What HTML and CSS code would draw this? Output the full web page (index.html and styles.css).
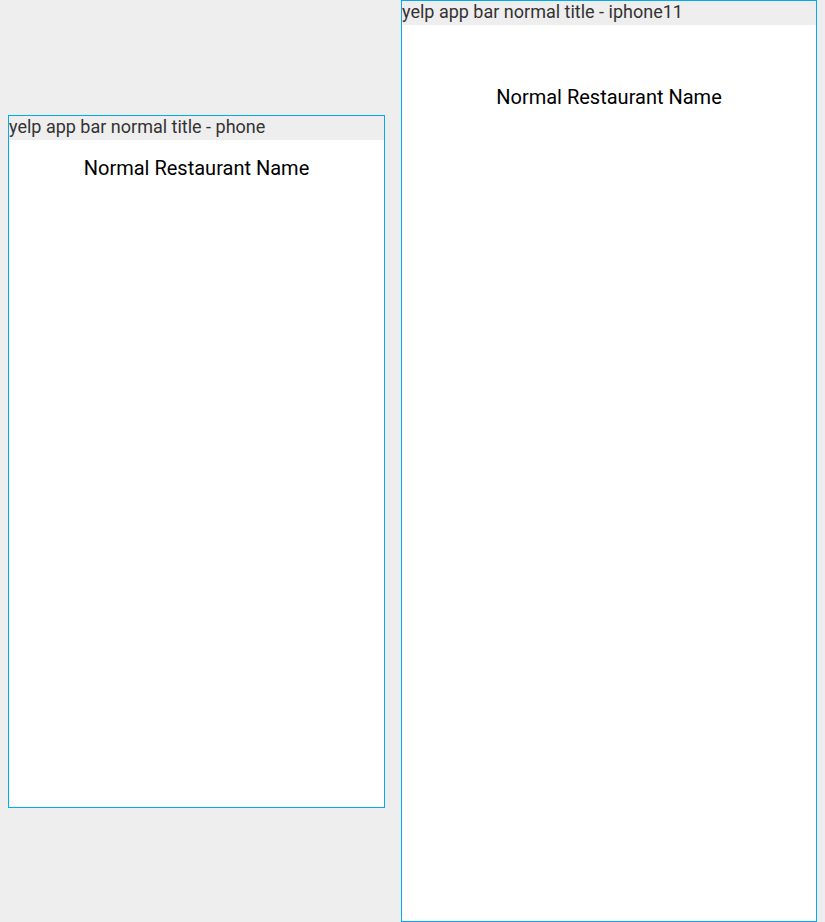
FILE: index.html
```html
<!DOCTYPE html>
<html>
<head>
<meta charset="utf-8">
<link rel="stylesheet" href="styles.css">
</head>
<body>
<div class="board">
  <div class="device device-phone">
    <div class="label">yelp app bar normal title - phone</div>
    <div class="screen">
      <div class="appbar"><span class="title">Normal Restaurant Name</span></div>
    </div>
  </div>
  <div class="device device-iphone">
    <div class="label">yelp app bar normal title - iphone11</div>
    <div class="screen">
      <div class="safe-top"></div>
      <div class="appbar"><span class="title">Normal Restaurant Name</span></div>
    </div>
  </div>
</div>
</body>
</html>
```

FILE: styles.css
```css
html, body {
  margin: 0;
  padding: 0;
  background: #eeeeee;
}
body {
  font-family: Roboto, "Noto Sans", sans-serif;
}
.board {
  display: flex;
  align-items: center;
  gap: 16px;
  padding-left: 8px;
  height: 922px;
}
.device {
  border: 1px solid #03a9f4;
  display: flex;
  flex-direction: column;
}
.label {
  height: 24px;
  line-height: 22px;
  font-size: 18px;
  color: #333333;
  background: #eeeeee;
  white-space: nowrap;
  overflow: hidden;
}
.screen {
  background: #ffffff;
  display: flex;
  flex-direction: column;
}
.device-phone .screen {
  width: 375px;
  height: 667px;
}
.device-iphone .screen {
  width: 414px;
  height: 896px;
}
.safe-top {
  height: 44px;
}
.appbar {
  height: 56px;
  display: flex;
  align-items: center;
  justify-content: center;
}
.title {
  font-size: 20px;
  color: #000000;
}
```
